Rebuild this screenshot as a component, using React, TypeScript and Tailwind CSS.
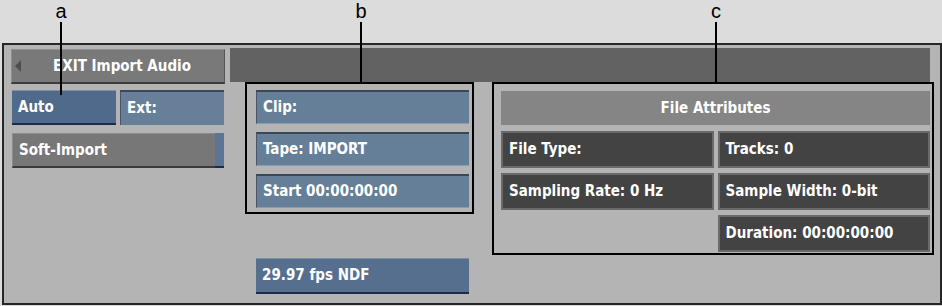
import React from "react";

const font = "font-['DejaVu_Sans_Condensed','DejaVu_Sans',sans-serif]";

const Callout = ({ letter, x, to }: { letter: string; x: number; to: string }) => {
  return (
    <div className="absolute top-0 flex flex-col items-center" style={{ left: x - 10, width: 20 }}>
      <span className="font-['Liberation_Sans',Arial,sans-serif] text-[20px] leading-[22px] text-black">{letter}</span>
      <div className={"w-[2px] bg-black " + to}></div>
    </div>
  );
};

const BlueBtn = ({ label, w }: { label: string; w: string }) => (
  <div
    className={
      w +
      " h-[34px] flex items-center pl-[6px] bg-[#667f99] border-t-2 border-l border-t-[#3c4656] border-l-[#4a5668] border-b border-b-[#8a9ab0] text-white text-[15px] font-bold"
    }
  >
    {label}
  </div>
);

const Cell = ({ label }: { label: string }) => (
  <div className="h-[37px] flex items-center pl-[6px] bg-[#434343] border-2 border-[#6a6a6a] text-white text-[15px] font-bold">
    {label}
  </div>
);

export default function App() {
  return (
    <div className={"relative w-[942px] h-[306px] bg-[#dcdcdc] overflow-hidden " + font}>
      <div className="ml-[2px] mt-[43px] w-[940px] h-[262px] border-2 border-[#262626] bg-[#b4b4b4] flex">
        {/* left column */}
        <div className="ml-[7px] mt-[4px] w-[214px] flex flex-col">
          <div className="h-[35px] flex items-center bg-[#797979] border-t border-l border-t-[#8e8e8e] border-l-[#8e8e8e] border-b-2 border-r border-b-[#3c3c3c] border-r-[#555] text-white text-[15px] font-bold">
            <div className="ml-[3px] w-0 h-0 border-y-[6px] border-y-transparent border-r-[6px] border-r-[#4e4e4e]"></div>
            <span className="ml-[32px]">EXIT Import Audio</span>
          </div>
          <div className="mt-[6px] flex gap-[4px] ml-[1px]">
            <div className="w-[104px] h-[35px] flex items-center pl-[6px] bg-[#506a8b] border-t border-t-[#7b91ad] border-b-2 border-b-[#1e2a48] text-white text-[15px] font-bold">
              Auto
            </div>
            <div className="w-[104px] h-[35px] flex items-center pl-[6px] bg-[#687f9a] border-t-2 border-t-[#3c4656] border-l border-l-[#4a5668] text-white text-[15px] font-bold">
              Ext:
            </div>
          </div>
          <div className="mt-[8px] ml-[1px] flex h-[35px]">
            <div className="w-[203px] flex items-center pl-[6px] bg-[#777777] border-t border-l border-t-[#8c8c8c] border-l-[#8c8c8c] border-b-2 border-b-[#3a3a3a] text-white text-[15px] font-bold">
              Soft-Import
            </div>
            <div className="w-[9px] bg-[#5a7596] border-b-2 border-b-[#1e2a48]"></div>
          </div>
        </div>

        {/* right area */}
        <div className="ml-[5px] mt-[3px] flex flex-col w-[704px]">
          <div className="w-[700px] h-[34px] bg-[#626262]"></div>
          <div className="flex">
            <div className="ml-[15px] flex flex-col">
              <div className="w-[229px] h-[132px] border-2 border-black pl-[9px] pt-[6px] flex flex-col gap-[8px]">
                <BlueBtn label="Clip:" w="w-[213px]" />
                <BlueBtn label="Tape: IMPORT" w="w-[213px]" />
                <BlueBtn label="Start 00:00:00:00" w="w-[213px]" />
              </div>
              <div className="mt-[44px] ml-[11px] w-[213px] h-[36px] flex items-center pl-[6px] bg-[#566f8f] border-t border-t-[#7a8fab] border-b-2 border-b-[#1e2a48] text-white text-[15px] font-bold">
                29.97 fps NDF
              </div>
            </div>
            <div className="ml-[18px] w-[442px] h-[173px] border-2 border-black pl-[7px] pr-[2px] pt-[7px] flex flex-col">
              <div className="h-[34px] bg-[#858585] flex items-center justify-center text-white text-[15px] font-bold">
                File Attributes
              </div>
              <div className="mt-[6px] grid grid-cols-2 gap-x-[4px] gap-y-[5px]">
                <Cell label="File Type:" />
                <Cell label="Tracks: 0" />
                <Cell label="Sampling Rate: 0 Hz" />
                <Cell label="Sample Width: 0-bit" />
                <div></div>
                <Cell label="Duration: 00:00:00:00" />
              </div>
            </div>
          </div>
        </div>
      </div>

      <Callout letter="a" x={61} to="h-[73px]" />
      <Callout letter="b" x={361} to="h-[61px]" />
      <Callout letter="c" x={716} to="h-[61px]" />
    </div>
  );
}
